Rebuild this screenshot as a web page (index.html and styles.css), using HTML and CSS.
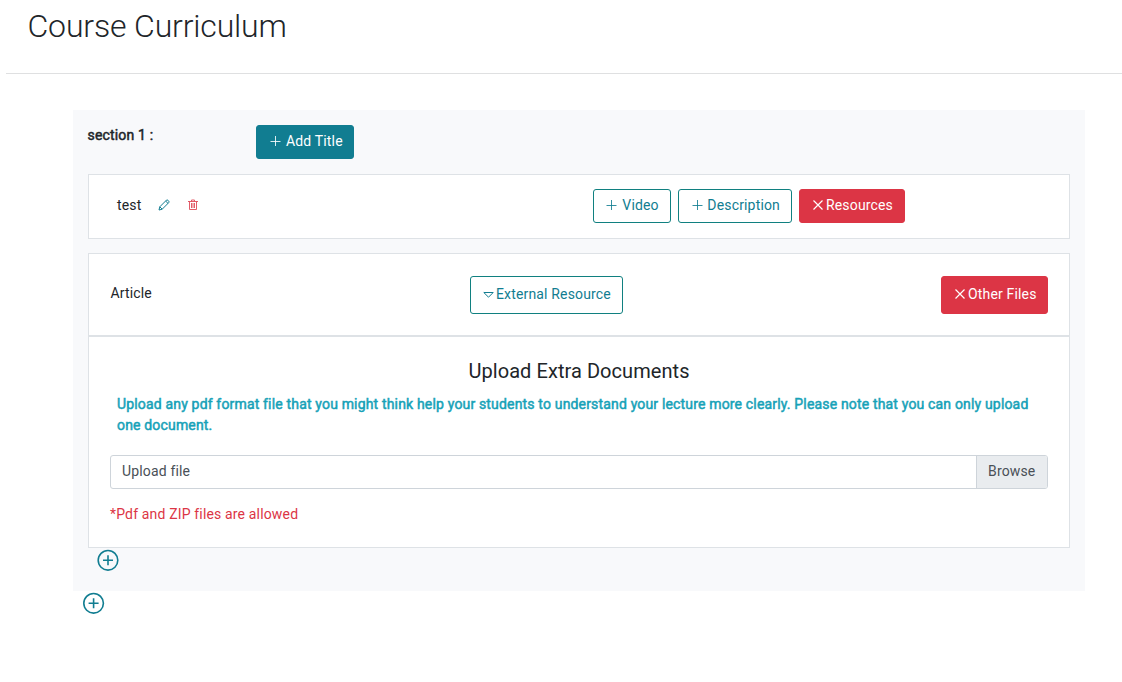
FILE: index.html
```
<!DOCTYPE html>
<html lang="en">
<head>
<meta charset="utf-8">
<title>Course Curriculum</title>
<link rel="stylesheet" href="styles.css">
</head>
<body>
<header class="page-header"><h1 class="page-title">Course Curriculum</h1></header>
<main class="curriculum">
  <section class="section">
    <div class="section-head">
      <span class="section-name strong">section 1 :</span>
      <button class="btn btn-solid"><svg class="icon plus" viewBox="0 0 11 11"><path d="M6.500 0v10M1.500 5.500h10"/></svg><span>Add Title</span></button>
    </div>
    <div class="card lecture">
      <div class="lecture-name">
        <span>test</span>
        <svg class="icon pencil" viewBox="0 0 12 12"><path d="M1 11l.8-3.2L8.300 1.300q.8-.7 1.700 0l.7.7q.7.900 0 1.700L4.200 10.200zM1.800 7.800l2.400 2.400M7.600 2l2.400 2.400"/></svg>
        <svg class="icon trash" viewBox="0 0 10 12"><path d="M0 2.500h10M3.500 2.500v-1.500h3v1.500M1.500 2.500v8h7v-8M3.500 4v5M5 4v5M6.500 4v5"/></svg>
      </div>
      <div class="lecture-actions">
        <button class="btn btn-outline video"><svg class="icon plus" viewBox="0 0 11 11"><path d="M5.500 0v10M.5 5.500h10"/></svg><span>Video</span></button>
        <button class="btn btn-outline"><svg class="icon plus" viewBox="0 0 11 11"><path d="M6.500 0v10M1.500 5.500h10"/></svg><span>Description</span></button>
        <button class="btn btn-danger"><svg class="icon close" viewBox="0 0 10 10"><path d="M.5.5l9 9M9.500.5l-9 9"/></svg><span>Resources</span></button>
      </div>
    </div>
    <div class="card resource-types">
      <span class="article">Article</span>
      <button class="btn btn-outline btn-tall external"><svg class="icon caret" viewBox="0 0 11 6"><path d="M.8.5h9.400L5.500 5.200z"/></svg><span>External Resource</span></button>
      <button class="btn btn-danger btn-tall other"><svg class="icon close" viewBox="0 0 10 10"><path d="M.5.5l9 9M9.500.5l-9 9"/></svg><span>Other Files</span></button>
    </div>
    <div class="card upload">
      <h2 class="upload-title">Upload Extra Documents</h2>
      <p class="upload-note strong">Upload any pdf format file that you might think help your students to understand your lecture more clearly. Please note that you can only upload one document.</p>
      <label class="file"><span class="file-name">Upload file</span><span class="file-browse">Browse</span></label>
      <p class="file-hint">*Pdf and ZIP files are allowed</p>
    </div>
    <svg class="add-circle" viewBox="0 0 22 22"><circle cx="11" cy="11.300" r="9.800"/><path d="M11 6.300v10M6 11.300h10"/></svg>
  </section>
  <svg class="add-circle outer" viewBox="0 0 22 22"><circle cx="10.600" cy="11.300" r="9.800"/><path d="M10.600 6.300v10M5.600 11.300h10"/></svg>
</main>
</body>
</html>
```
FILE: styles.css
```
* { box-sizing: border-box; }
body {
  margin: 0;
  background: #fff;
  color: #212529;
  font: 400 14px/21px Roboto, sans-serif;
  letter-spacing: 0.16px;
  overflow: hidden;
}
h1, h2, p { margin: 0; font-weight: 400; }
.page-header {
  height: 74px;
  margin-left: 6px;
  padding: 5px 0 0 21.5px;
  border-bottom: 1px solid #dfe0e1;
}
.page-title { font-size: 32px; line-height: 42px; font-weight: 300; letter-spacing: -0.16px; }
.curriculum { margin: 36px 37px 0 73px; }
.section { height: 481px; padding: 15px; background: #f8f9fb; }
.strong { letter-spacing: 0.168px; -webkit-text-stroke: 0.5px currentColor; }
.section-head { display: flex; align-items: flex-start; height: 49px; }
.section-name { width: 168.5px; margin-left: -0.5px; }
.btn {
  display: flex;
  align-items: center;
  height: 34px;
  padding: 0 11px 1px 12px;
  border: 1px solid;
  border-radius: 3px;
  font: inherit;
  letter-spacing: inherit;
  white-space: nowrap;
}
.btn-solid { width: 98px; color: #fff; background: #117d91; border-color: #117d91; }
.btn-solid .plus { margin-right: 6px; }
.btn-outline { color: #117d91; background: #fff; border-color: #108080; }
.btn-danger { color: #fff; background: #dc3545; border-color: #dc3545; }
.btn-tall { height: 38px; }
.video { width: 78px; }
.icon { flex: none; fill: none; stroke: currentColor; stroke-width: 1; overflow: visible; }
.plus { width: 11px; height: 11px; margin-right: 5px; opacity: 0.85; }
.close { width: 10px; height: 10px; margin: 0 3px 2px 1px; stroke-width: 1.2; }
.caret { width: 11px; height: 6px; margin-right: 2px; }
.card { border: 1px solid #dee2e6; background: #fff; }
.lecture { display: flex; height: 65px; padding: 14px 164px 0 28px; justify-content: space-between; }
.lecture-name { display: flex; align-items: center; height: 33px; }
.pencil { width: 12px; height: 12px; margin: 0 0 2px 16.5px; color: #117d91; stroke-width: 1; }
.trash { width: 10px; height: 12px; margin: 0 0 1px 18px; color: #df4a58; stroke-width: 0.9; }
.lecture-actions { display: flex; gap: 7px; }
.resource-types { display: flex; height: 83px; margin-top: 14px; padding: 22px 21px 0; }
.article { width: 360px; padding: 7px 0 0 0.4px; }
.other { width: 107px; margin-left: auto; }
.upload { height: 212px; padding: 22px 21px 0; }
.upload-title { font-size: 20px; line-height: 25px; text-align: center; letter-spacing: 0.06px; }
.upload-note { margin: 10px 7px 19px; color: #17a2b8; }
.file { display: flex; height: 34px; border: 1px solid #ced4da; border-radius: 3px; color: #495057; line-height: 31px; overflow: hidden; }
.file-name { flex: 1; padding-left: 11px; }
.file-browse { width: 71px; padding-left: 11px; border-left: 1px solid #ced4da; background: #e9ecef; }
.file-hint { margin-top: 15px; color: #dc3545; }
.add-circle { display: block; width: 22px; height: 22px; margin: 1px 0 0 9px; fill: none; stroke: #117d91; stroke-width: 1.6; }
.outer { margin-left: 10px; }
```
